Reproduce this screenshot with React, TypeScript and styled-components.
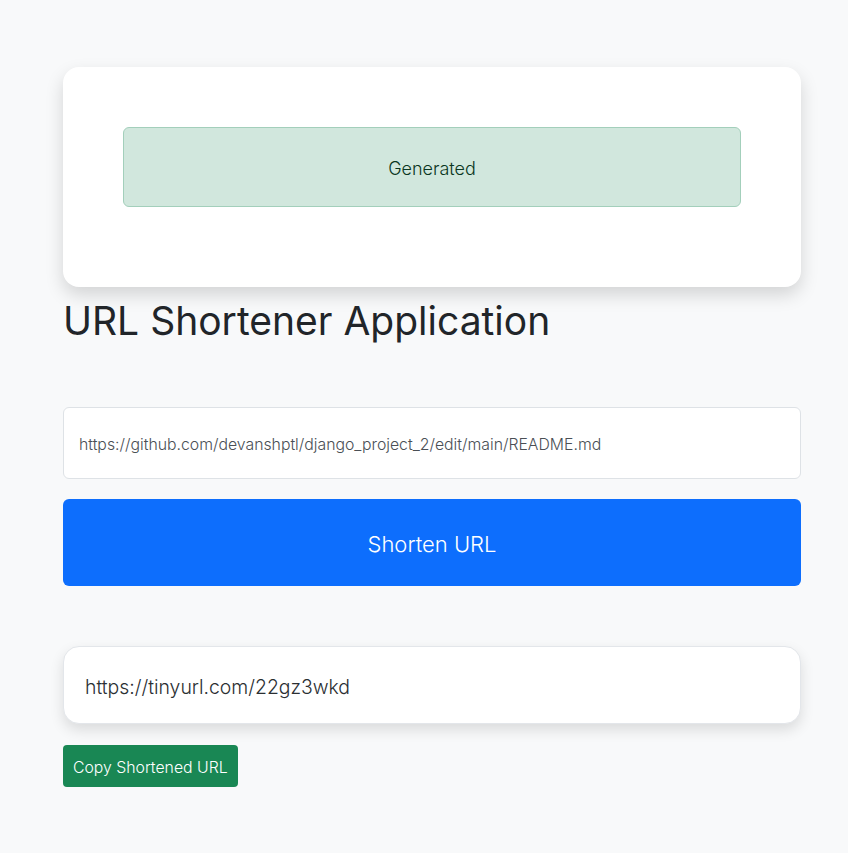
import * as React from 'react';
import styled, { createGlobalStyle } from 'styled-components';

const GlobalStyle = createGlobalStyle`
	* {
		box-sizing: border-box;
	}
	body {
		margin: 0;
		background: #f8f9fa;
		font-family: 'Inter', 'Noto Sans', sans-serif;
		color: #212529;
	}
`;

const Page = styled.main`
	width: 738px;
	margin: 0 0 0 63px;
	padding-top: 67px;
	padding-bottom: 60px;
`;

const StatusCard = styled.section`
	background: #ffffff;
	border-radius: 16px;
	padding: 60px 60px 80px 60px;
	box-shadow: 0 8px 18px rgba(0, 0, 0, 0.15);
`;

const Alert = styled.div`
	height: 80px;
	display: flex;
	align-items: center;
	justify-content: center;
	padding-top: 3px;
	background: #d1e7dd;
	border: 1px solid #a3cfbb;
	border-radius: 6px;
	color: #0a3622;
	font-size: 18px;
	font-weight: 300;
`;

const Title = styled.h1`
	margin: 10px 0 62px 0;
	font-size: 39px;
	font-weight: 400;
	line-height: 48px;
	color: #212529;
`;

const UrlInput = styled.input`
	display: block;
	width: 100%;
	height: 72px;
	padding: 2px 15px 0 15px;
	border: 1px solid #dee2e6;
	border-radius: 6px;
	background: #fff;
	font-family: inherit;
	font-size: 15.8px;
	font-weight: 300;
	color: #4a4f55;
	outline: none;
`;

const ShortenButton = styled.button`
	display: block;
	width: 100%;
	height: 87px;
	margin-top: 20px;
	padding-top: 4px;
	border: none;
	border-radius: 6px;
	background: #0d6efd;
	color: #fff;
	font-family: inherit;
	font-size: 22px;
	font-weight: 300;
	cursor: pointer;
`;

const ResultBox = styled.div`
	margin-top: 60px;
	height: 78px;
	display: flex;
	align-items: center;
	padding: 4px 21px 0 21px;
	background: #fff;
	border: 1px solid #e3e6ea;
	border-radius: 16px;
	box-shadow: 0 6px 14px rgba(0, 0, 0, 0.12);
	font-size: 19.4px;
	font-weight: 300;
	color: #2b2f33;
`;

const CopyButton = styled.button`
	margin-top: 21px;
	height: 42px;
	padding: 2px 10px 0 10px;
	border: none;
	border-radius: 4px;
	background: #198754;
	color: #fff;
	font-family: inherit;
	font-size: 15.8px;
	font-weight: 300;
	cursor: pointer;
`;

export default function App(): JSX.Element {
	const [longUrl, setLongUrl] = React.useState(
		'https://github.com/devanshptl/django_project_2/edit/main/README.md'
	);

	return (
		<>
			<GlobalStyle />
			<Page>
				<StatusCard>
					<Alert>Generated</Alert>
				</StatusCard>
				<Title>URL Shortener Application</Title>
				<UrlInput value={longUrl} onChange={(e) => setLongUrl(e.target.value)} />
				<ShortenButton>Shorten URL</ShortenButton>
				<ResultBox>https://tinyurl.com/22gz3wkd</ResultBox>
				<CopyButton>Copy Shortened URL</CopyButton>
			</Page>
		</>
	);
}
